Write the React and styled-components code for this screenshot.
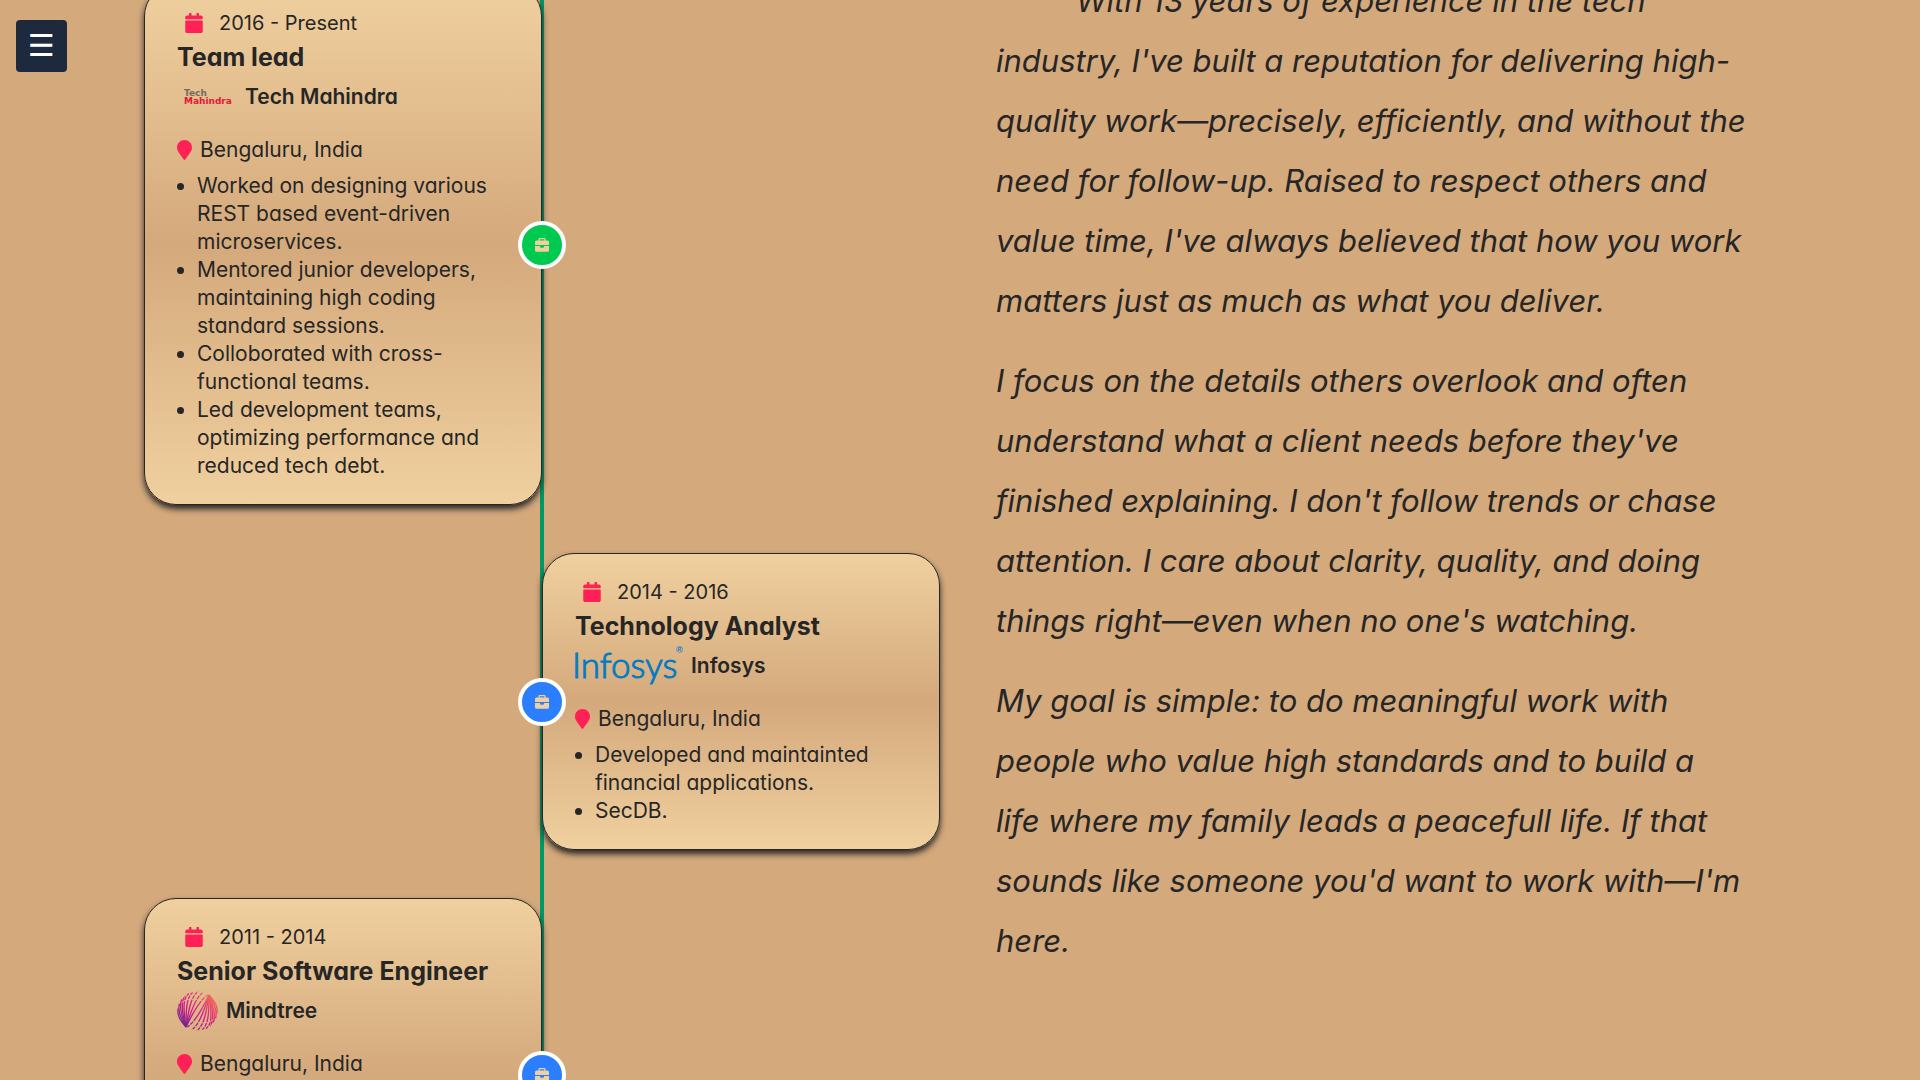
import React from "react";
import styled, { createGlobalStyle } from "styled-components";
import { FaCalendar, FaMapMarker } from "react-icons/fa";

const GlobalStyle = createGlobalStyle`
  *, *::before, *::after { box-sizing: border-box; }
  body {
    margin: 0;
    background: #d4a97c;
    color: #262626;
    font-family: Inter, "Open Sans", sans-serif;
    font-feature-settings: "cv11";
  }
`;

const Screen = styled.div`
  height: 100vh;
  overflow: hidden;
`;

const MenuButton = styled.button`
  position: fixed;
  top: 20px;
  left: 16px;
  z-index: 10;
  padding: 8px 12px;
  border: 0;
  border-radius: 4px;
  background: #1d293d;
  color: #fff;
  font-family: "DejaVu Sans", sans-serif;
  font-size: 30px;
  line-height: 36px;
  cursor: pointer;
`;

const Columns = styled.main`
  display: grid;
  grid-template-columns: minmax(0, 796fr) minmax(0, 780fr);
  gap: 56px;
  padding: 0 144px;
`;

const Timeline = styled.ol`
  display: flex;
  flex-direction: column;
  gap: 48px;
  margin: -16px 0 0;
  padding: 0;
  list-style: none;
  background: linear-gradient(#009966, #009966) center / 4px 100% no-repeat;
`;

const Entry = styled.li`
  position: relative;
  display: flex;
  justify-content: ${({ $side }) => ($side === "right" ? "flex-end" : "flex-start")};
`;

const Card = styled.article`
  width: 50%;
  padding: 24px 32px;
  border: 1px solid #262626;
  border-radius: 32px;
  background: linear-gradient(#f0d09f, #d4a97c, #f0d09f);
  box-shadow: 0 4px 6px #262626;
`;

const Dot = styled.span`
  position: absolute;
  top: 50%;
  left: 50%;
  transform: translate(-50%, -50%);
  display: flex;
  align-items: center;
  justify-content: center;
  width: 48px;
  height: 48px;
  border: 4px solid #fff;
  border-radius: 50%;
  background: ${({ $color }) => $color};
  color: #f0d09f;
`;

const Period = styled.p`
  display: flex;
  align-items: center;
  gap: 16px;
  margin: 0;
  padding-left: 8px;
  font-size: 20px;
  line-height: 28px;
  svg { width: 18px; color: #ff2056; }
`;

const Role = styled.h3`
  margin: 0;
  font-size: 25px;
  font-weight: 700;
  line-height: 40px;
  white-space: nowrap;
`;

const Company = styled.div`
  display: flex;
  align-items: center;
  gap: 8px;
  height: 40px;
  margin-bottom: 19px;
  font-size: 21px;
  font-weight: 600;
  line-height: 28px;
`;

const Place = styled.p`
  display: flex;
  align-items: center;
  gap: 8px;
  margin: 0 0 8px;
  font-size: 21px;
  line-height: 28px;
  svg { width: 15px; height: 20px; color: #ff2056; }
`;

const Duties = styled.ul`
  margin: 0;
  padding-left: 20px;
  font-size: 21px;
  line-height: 28px;
  list-style: disc;
`;

const About = styled.section`
  display: flex;
  flex-direction: column;
  gap: 20px;
  margin-top: -29px;
  padding-right: 16px;
`;

const Paragraph = styled.p`
  margin: 0;
  font-size: 31px;
  font-style: italic;
  line-height: 60px;
  text-indent: ${({ $indent }) => ($indent ? "80px" : "0")};
`;

const BriefcaseIcon = () => (
  <svg width="14" height="14" viewBox="0 0 14 14" fill="currentColor" aria-hidden="true">
    <path
      fillRule="evenodd"
      d="M4.5 0h5a1 1 0 0 1 1 1v1.6h2A1.5 1.5 0 0 1 14 4.1V7H0V4.1a1.5 1.5 0 0 1 1.5-1.5h2V1a1 1 0 0 1 1-1zM4.7 1.2v1.4h4.6V1.2z"
    />
    <path d="M0 8h5v.4c0 .8.5 1.4 1.3 1.4h1.4c.8 0 1.3-.6 1.3-1.4V8h5v4.2a1.5 1.5 0 0 1-1.5 1.5h-11A1.5 1.5 0 0 1 0 12.200z" />
  </svg>
);

const TechMahindraLogo = () => (
  <svg width="60" height="40" viewBox="0 0 60 40" aria-hidden="true">
    <g fontFamily="DejaVu Sans" fontWeight="700" fontSize="9">
      <text x="7" y="19" fill="#75695f">Tech</text>
      <text x="7" y="27" fill="#e31837">Mahindra</text>
    </g>
  </svg>
);

const InfosysLogo = () => (
  <svg width="108" height="40" viewBox="0 0 108 40" overflow="visible" aria-hidden="true">
    <text
      x="-3"
      y="32"
      fontFamily="Lato"
      fontWeight="300"
      fontSize="35"
      fill="#007cc3"
      stroke="#007cc3"
      strokeWidth="1"
    >
      Infosys
    </text>
    <text x="101" y="7" fontFamily="Liberation Sans" fontSize="9" fill="#007cc3">®</text>
  </svg>
);

const FAN_ANGLES = [188, 202, 216, 230, 244, 258, 272, 287, 303];

const fanPath = (angle, i) => {
  const a = (angle * Math.PI) / 180;
  const x = 20.5 + 19.5 * Math.cos(a);
  const y = 20 + 19.5 * Math.sin(a);
  return `M9 36 C${2 + i * 1.5} ${28 - i * 0.3} ${Math.max(x - 9, i * 0.9)} ${y + 6} ${x} ${y}`;
};

const Fan = () =>
  FAN_ANGLES.map((angle, i) => (
    <path key={angle} d={fanPath(angle, i)} strokeDasharray={i > 2 ? `${22 + i} 1 4 1 3 1` : undefined} />
  ));

const MindtreeLogo = () => (
  <svg width="41" height="40" viewBox="0 0 41 40" aria-hidden="true">
    <defs>
      <linearGradient id="mindtree-a" gradientUnits="userSpaceOnUse" x1="4" y1="36" x2="36" y2="4">
        <stop offset="0" stopColor="#5b2a8c" />
        <stop offset="0.4" stopColor="#d6168b" />
        <stop offset="0.7" stopColor="#e0307c" />
        <stop offset="1" stopColor="#f58a4b" />
      </linearGradient>
      <linearGradient id="mindtree-b" gradientUnits="userSpaceOnUse" x1="36" y1="4" x2="4" y2="36">
        <stop offset="0" stopColor="#7b2a8c" />
        <stop offset="0.5" stopColor="#d6168b" />
        <stop offset="1" stopColor="#f5764b" />
      </linearGradient>
    </defs>
    <g fill="none" strokeWidth="1.3">
      <g stroke="url(#mindtree-a)"><Fan /></g>
      <g stroke="url(#mindtree-b)" transform="rotate(180 20.5 20)"><Fan /></g>
    </g>
  </svg>
);

const JOBS = [
  {
    period: "2016 - Present", role: "Team lead", company: "Tech Mahindra", Logo: TechMahindraLogo,
    side: "left", color: "#00c950",
    duties: [
      "Worked on designing various REST based event-driven microservices.",
      "Mentored junior developers, maintaining high coding standard sessions.",
      "Colloborated with cross-functional teams.",
      "Led development teams, optimizing performance and reduced tech debt.",
    ],
  },
  {
    period: "2014 - 2016", role: "Technology Analyst", company: "Infosys", Logo: InfosysLogo,
    side: "right", color: "#2b7fff",
    duties: ["Developed and maintainted financial applications.", "SecDB."],
  },
  {
    period: "2011 - 2014", role: "Senior Software Engineer", company: "Mindtree", Logo: MindtreeLogo,
    side: "left", color: "#2b7fff",
    duties: ["Developed and maintained web applications.", "Unit testing.", "Code reviews.", "Support."],
  },
];

export default function App() {
  return (
    <Screen>
      <GlobalStyle />
      <MenuButton type="button" aria-label="Open menu">☰</MenuButton>
      <Columns>
        <Timeline>
          {JOBS.map(({ period, role, company, Logo, side, color, duties }) => (
            <Entry key={period} $side={side}>
              <Card>
                <Period><FaCalendar />{period}</Period>
                <Role>{role}</Role>
                <Company><Logo />{company}</Company>
                <Place><FaMapMarker />Bengaluru, India</Place>
                <Duties>{duties.map((d) => <li key={d}>{d}</li>)}</Duties>
              </Card>
              <Dot $color={color}><BriefcaseIcon /></Dot>
            </Entry>
          ))}
        </Timeline>
        <About>
          <Paragraph $indent>
            With 13 years of experience in the tech industry, I've built a reputation for delivering
            high-quality work—precisely, efficiently, and without the need for follow-up. Raised to
            respect others and value time, I've always believed that how you work matters just as
            much as what you deliver.
          </Paragraph>
          <Paragraph>
            I focus on the details others overlook and often understand what a client needs before
            they've finished explaining. I don't follow trends or chase attention. I care about
            clarity, quality, and doing things right—even when no one's watching.
          </Paragraph>
          <Paragraph>
            My goal is simple: to do meaningful work with people who value high standards and to
            build a life&nbsp;where my family leads a peacefull life. If that sounds like someone
            you'd want to work with—I'm here.
          </Paragraph>
        </About>
      </Columns>
    </Screen>
  );
}
